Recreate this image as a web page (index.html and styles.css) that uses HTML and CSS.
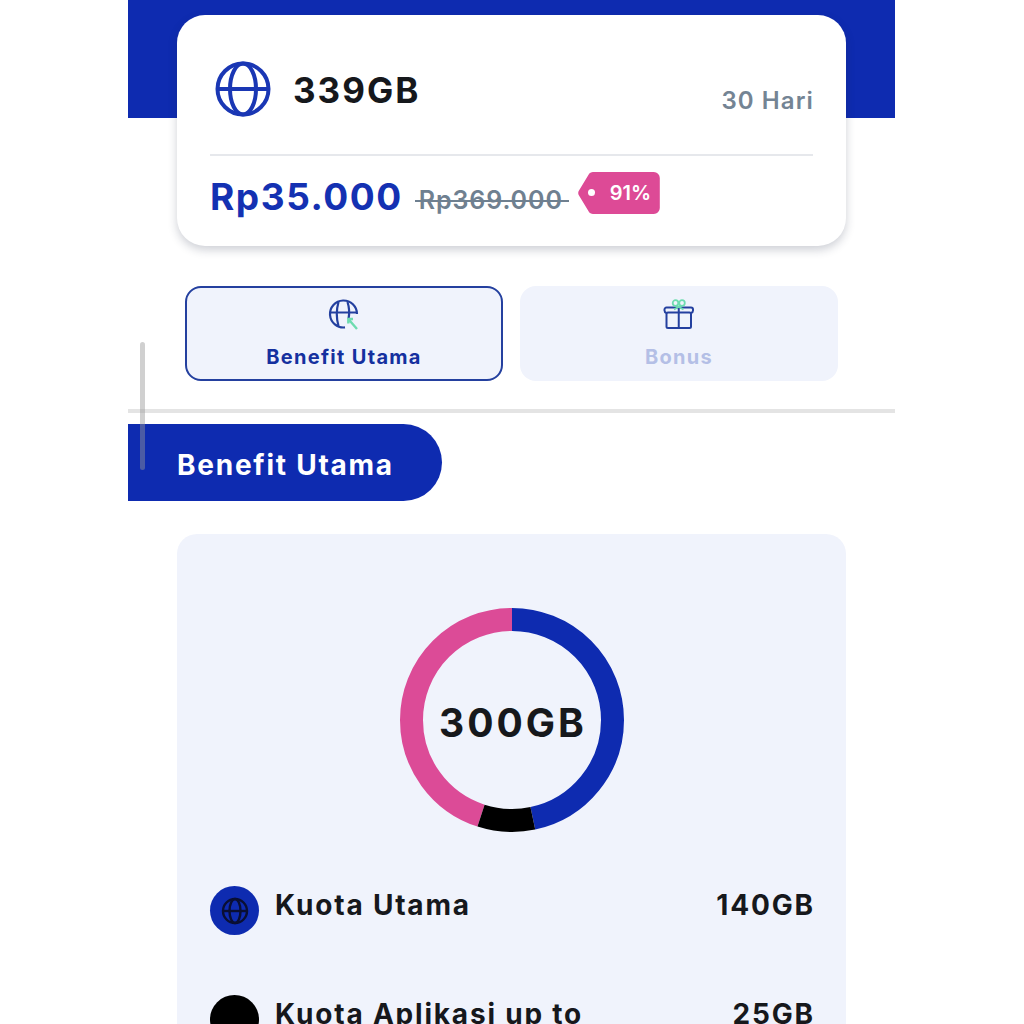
FILE: index.html
```html
<!DOCTYPE html>
<html lang="id">
<head>
<meta charset="utf-8">
<title>Paket 339GB</title>
<link rel="stylesheet" href="styles.css">
</head>
<body>
<main class="phone">
  <div class="hero-band"></div>
  <section class="plan-card">
    <div class="plan-top">
      <div class="plan-name">
        <svg class="plan-globe" viewBox="0 0 56 56" fill="none" stroke="#1a37b4" stroke-width="4">
          <circle cx="28" cy="28" r="25.5"/>
          <ellipse cx="28" cy="28" rx="13" ry="25.5"/>
          <path d="M2.5 28h51"/>
        </svg>
        <span class="plan-quota">339GB</span>
      </div>
      <span class="plan-days">30 Hari</span>
    </div>
    <div class="plan-price">
      <span class="price-now">Rp35.000</span>
      <span class="price-old">Rp369.000</span>
      <span class="price-tag">91%</span>
    </div>
  </section>

  <nav class="tabs">
    <div class="tab tab-active">
      <svg class="tab-icon" viewBox="0 0 32 32" fill="none" stroke-width="2.200">
        <path d="M29 15A13.500 13.500 0 1 0 17 28.400" stroke="#24409f"/>
        <path d="M10.500 3C8.500 10 8.500 20 10.500 27M19.500 3C21.500 9 21.500 15 20.500 20M2 13.500H28.500" stroke="#24409f"/>
        <path d="M20.300 24.500V20H25M20.500 20.200L29 30" stroke="#6edcb0" stroke-width="2.400"/>
      </svg>
      <span>Benefit Utama</span>
    </div>
    <div class="tab tab-muted">
      <svg class="tab-icon" viewBox="0 0 32 32" fill="none" stroke-width="2">
        <path d="M3.500 14C2 13.500 1.500 12.500 1.500 11.500V10.500A2 2 0 0 1 3.500 8.500H28A2 2 0 0 1 30 10.500V11.500C30 12.500 29.500 13.500 28 14" stroke="#24409f"/>
        <rect x="3.500" y="13.500" width="24.500" height="15.500" rx="1.500" stroke="#24409f"/>
        <path d="M15.750 8.500V29" stroke="#24409f"/>
        <circle cx="12.500" cy="4" r="2.800" stroke="#6edcb0" stroke-width="1.800"/>
        <circle cx="19" cy="4" r="2.800" stroke="#6edcb0" stroke-width="1.800"/>
        <path d="M13.500 6.500L20.500 10.500M18 6.500L11 10.500" stroke="#6edcb0" stroke-width="1.800"/>
      </svg>
      <span>Bonus</span>
    </div>
  </nav>

  <div class="divider"></div>

  <h2 class="section-pill">Benefit Utama</h2>

  <section class="quota-card">
    <div class="donut">
      <svg class="donut-ring" viewBox="0 0 224 224" fill="none" stroke-width="23">
        <circle class="seg seg-pink" cx="112" cy="112" r="100.500" pathLength="300"/>
        <circle class="seg seg-blue" cx="112" cy="112" r="100.500" pathLength="300"/>
        <circle class="seg seg-black" cx="112" cy="112" r="100.500" pathLength="300"/>
      </svg>
      <span class="donut-label">300GB</span>
    </div>
    <div class="legend">
      <div class="legend-row">
        <span class="legend-dot dot-blue">
          <svg class="dot-globe" viewBox="0 0 28 28" fill="none" stroke="#0a0f33" stroke-width="2.400">
            <circle cx="14" cy="14" r="12"/>
            <ellipse cx="14" cy="14" rx="5.500" ry="12"/>
            <path d="M2 14h24"/>
          </svg>
        </span>
        <span class="legend-name">Kuota Utama</span>
        <span class="legend-size">140GB</span>
      </div>
      <div class="legend-row">
        <span class="legend-dot dot-black"></span>
        <span class="legend-name">Kuota Aplikasi up to</span>
        <span class="legend-size">25GB</span>
      </div>
    </div>
  </section>

  <div class="scrollbar"></div>
</main>
</body>
</html>
```
FILE: styles.css
```css
* { box-sizing: border-box; }

html, body {
  margin: 0;
  height: 1024px;
  overflow: hidden;
  background: #fff;
}

body {
  font-family: "Inter", "Open Sans", "Liberation Sans", sans-serif;
  color: #16181c;
}

.phone {
  position: relative;
  width: 767px;
  height: 1024px;
  margin-left: 128px;
  padding-top: 15px;
  overflow: hidden;
  background: #fff;
}

.hero-band {
  position: absolute;
  inset: 0 0 auto 0;
  height: 118px;
  background: #0e2bb0;
}

.plan-card {
  position: relative;
  width: 669px;
  height: 231px;
  margin-left: 49px;
  padding: 44px 33px 0;
  background: #fff;
  border-radius: 28px;
  box-shadow: 0 4px 10px rgba(30, 40, 70, 0.22);
}

.plan-top {
  display: flex;
  justify-content: space-between;
  align-items: flex-end;
  height: 97px;
  padding-bottom: 39px;
  border-bottom: 2px solid #e6e8ec;
}

.plan-name {
  display: flex;
  align-items: center;
  gap: 22px;
  margin-left: 5px;
}

.plan-globe {
  width: 56px;
  height: 56px;
  flex: none;
  margin-bottom: -2px;
}

.plan-quota {
  margin-top: 4px;
  font-size: 35px;
  font-weight: 700;
  letter-spacing: 2px;
}

.plan-days {
  font-size: 24px;
  font-weight: 600;
  letter-spacing: 1.100px;
  color: #748494;
  line-height: 28px;
  margin-right: -1px;
}

.plan-price {
  display: flex;
  align-items: center;
  margin-top: 20px;
}

.price-now {
  font-size: 37px;
  font-weight: 700;
  letter-spacing: 1.550px;
  color: #1431b2;
  line-height: 42px;
}

.price-old {
  position: relative;
  margin-left: 16px;
  margin-top: 6px;
  font-size: 25px;
  font-weight: 600;
  letter-spacing: 0.900px;
  color: #6f8090;
  line-height: 30px;
}

.price-old::after {
  content: "";
  position: absolute;
  left: -4px;
  right: -6px;
  top: 15px;
  height: 2px;
  background: #6f8090;
}

.price-tag {
  position: relative;
  width: 82px;
  height: 42px;
  margin-left: 15px;
  margin-top: -8px;
  padding-left: 32px;
  font-size: 20px;
  font-weight: 600;
  line-height: 42px;
  color: #fff;
  background: #dd4a96;
  clip-path: path("M15 0H76a6 6 0 0 1 6 6V36a6 6 0 0 1-6 6H15a5 5 0 0 1-3.500-1.500L1.500 24a5 5 0 0 1 0-6L11.500 1.500A5 5 0 0 1 15 0Z");
}

.price-tag::before {
  content: "";
  position: absolute;
  left: 10px;
  top: 17px;
  width: 7px;
  height: 7px;
  border-radius: 50%;
  background: #fff;
}

.tabs {
  display: flex;
  gap: 17px;
  margin: 40px 0 0 57px;
}

.tab {
  display: flex;
  flex-direction: column;
  align-items: center;
  width: 318px;
  height: 95px;
  padding-top: 13px;
  border-radius: 16px;
  background: #f0f3fc;
  font-size: 20px;
  font-weight: 700;
  letter-spacing: 1.300px;
}

.tab span { line-height: 24px; margin-top: 14px; }

.tab-active {
  border: 2px solid #24409f;
  padding-top: 13px;
  color: #15309f;
}

.tab-muted { color: #b4bfe6; }

.tab-icon {
  width: 32px;
  height: 32px;
  flex: none;
}

.tab-active .tab-icon { margin-top: -2px; }

.divider {
  height: 4px;
  margin-top: 28px;
  background: #e4e4e4;
}

.section-pill {
  display: flex;
  align-items: center;
  width: 314px;
  height: 77px;
  margin: 11px 0 0;
  padding: 4px 0 0 49px;
  background: #0e2bb0;
  border-radius: 0 38.500px 38.500px 0;
  color: #fff;
  font-size: 28px;
  font-weight: 700;
  letter-spacing: 1.750px;
}

.quota-card {
  width: 669px;
  height: 600px;
  margin: 33px 0 0 49px;
  padding: 74px 33px 0;
  background: #f0f3fc;
  border-radius: 20px;
}

.donut {
  position: relative;
  width: 224px;
  height: 224px;
  margin: 0 auto;
}

.donut-ring {
  display: block;
  width: 224px;
  height: 224px;
  transform: rotate(-90deg);
}

.seg-pink { stroke: #dc4b97; stroke-dasharray: 135 165; stroke-dashoffset: -165; }
.seg-blue { stroke: #0e2bb0; stroke-dasharray: 140 160; }
.seg-black { stroke: #000; stroke-dasharray: 25 275; stroke-dashoffset: -140; }

.donut-label {
  position: absolute;
  inset: 0;
  display: flex;
  align-items: center;
  justify-content: center;
  padding: 4px 0 0 3px;
  font-size: 39px;
  font-weight: 700;
  letter-spacing: 3px;
}

.legend {
  display: flex;
  flex-direction: column;
  gap: 60px;
  margin-top: 54px;
}

.legend-row {
  display: flex;
  align-items: flex-start;
  height: 49px;
  font-size: 28px;
  font-weight: 700;
  letter-spacing: 1.800px;
  line-height: 38px;
}

.legend-dot {
  display: flex;
  align-items: center;
  justify-content: center;
  width: 49px;
  height: 49px;
  flex: none;
  border-radius: 50%;
  margin-right: 16px;
}

.dot-blue { background: #0e2bb0; }
.dot-black { background: #000; }

.dot-globe { width: 28px; height: 28px; }

.legend-name { flex: 1; }

.legend-size { margin-right: -1.800px; }

.scrollbar {
  position: absolute;
  left: 12px;
  top: 342px;
  width: 5px;
  height: 128px;
  border-radius: 3px;
  background: rgba(150, 150, 150, 0.45);
}
```
